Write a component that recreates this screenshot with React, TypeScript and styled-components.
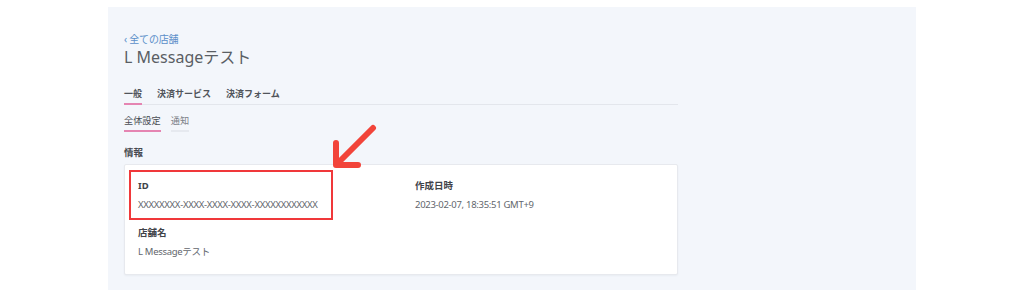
import React from 'react'
import styled, { createGlobalStyle } from 'styled-components'

const GlobalStyle = createGlobalStyle`
    html, body {
        margin: 0;
        padding: 0;
        background: #ffffff;
        font-family: 'Noto Sans', 'Noto Sans CJK JP', sans-serif;
    }
`

interface Tab {
    label: string
    active?: boolean
}

interface Field {
    label: string
    value: string
    highlighted?: boolean
}

const mainTabs: Tab[] = [
    { label: '一般', active: true },
    { label: '決済サービス' },
    { label: '決済フォーム' },
]

const subTabs: Tab[] = [{ label: '全体設定', active: true }, { label: '通知' }]

const fields: Field[] = [
    { label: 'ID', value: 'XXXXXXXX-XXXX-XXXX-XXXX-XXXXXXXXXXXX', highlighted: true },
    { label: '作成日時', value: '2023-02-07, 18:35:51 GMT+9' },
    { label: '店舗名', value: 'L Messageテスト' },
]

const App: React.FC = () => {
    return (
        <Page>
            <GlobalStyle />
            <Panel>
                <Content>
                    <BackLink>‹ 全ての店舗</BackLink>
                    <Title>L Messageテスト</Title>

                    <TabBar>
                        {mainTabs.map((tab) => (
                            <MainTab key={tab.label} $active={tab.active}>
                                {tab.label}
                            </MainTab>
                        ))}
                    </TabBar>

                    <SubTabBar>
                        {subTabs.map((tab) => (
                            <SubTab key={tab.label} $active={tab.active}>
                                {tab.label}
                            </SubTab>
                        ))}
                    </SubTabBar>

                    <SectionTitle>情報</SectionTitle>
                    <Card>
                        {fields.map((field) => (
                            <FieldBox key={field.label}>
                                {field.highlighted && <Highlight />}
                                <FieldLabel>{field.label}</FieldLabel>
                                <FieldValue>{field.value}</FieldValue>
                            </FieldBox>
                        ))}
                    </Card>
                </Content>

                <Arrow width="56" height="52" viewBox="0 0 56 52">
                    <path
                        d="M44 4 L9 39 M7 19 L7 41 L29 41"
                        fill="none"
                        stroke="#f2443a"
                        strokeWidth="6"
                        strokeLinecap="round"
                        strokeLinejoin="round"
                    />
                </Arrow>
            </Panel>
        </Page>
    )
}

export default App

const Page = styled.div`
    padding-top: 7px;
    height: 298px;
    box-sizing: border-box;
`

const Panel = styled.div`
    position: relative;
    margin-left: 108px;
    width: 808px;
    height: 283px;
    background: #f3f6fb;
    padding: 25px 16px 0;
    box-sizing: border-box;
`

const Content = styled.div`
    width: 554px;
    display: flex;
    flex-direction: column;
    align-items: flex-start;
`

const BackLink = styled.a`
    font-size: 10px;
    line-height: 14px;
    color: #5b8fc9;
    letter-spacing: -0.2px;
`

const Title = styled.h1`
    margin: 0;
    font-size: 16px;
    line-height: 22px;
    font-weight: 400;
    color: #5a5e64;
`

const TabBar = styled.div`
    margin-top: 19px;
    width: 100%;
    display: flex;
    gap: 15px;
    border-bottom: 1px solid #e3e6ec;
`

const MainTab = styled.div<{ $active?: boolean }>`
    font-size: 9px;
    line-height: 14px;
    font-weight: 700;
    color: #50545a;
    padding-bottom: 2px;
    margin-bottom: -1px;
    border-bottom: 2px solid ${({ $active }) => ($active ? '#e585b2' : 'transparent')};
`

const SubTabBar = styled.div`
    margin-top: 9px;
    display: flex;
    gap: 10px;
`

const SubTab = styled.div<{ $active?: boolean }>`
    font-size: 9.2px;
    line-height: 14px;
    color: ${({ $active }) => ($active ? '#4a4e54' : '#7b8087')};
    padding-bottom: 2px;
    border-bottom: 2px solid ${({ $active }) => ($active ? '#e585b2' : '#e6e9ef')};
`

const SectionTitle = styled.div`
    margin-top: 14px;
    font-size: 9.5px;
    line-height: 14px;
    font-weight: 700;
    color: #45494f;
`

const Card = styled.div`
    margin-top: 4px;
    width: 100%;
    box-sizing: border-box;
    height: 111px;
    background: #ffffff;
    border: 1px solid #e7e9ee;
    border-radius: 2px;
    box-shadow: 0 1px 2px rgba(40, 50, 70, 0.05);
    padding: 14px 13px 0;
    display: grid;
    grid-template-columns: 277px 1fr;
    row-gap: 14px;
    align-content: start;
`

const FieldBox = styled.div`
    position: relative;
    display: flex;
    flex-direction: column;
    gap: 5px;
`

const Highlight = styled.div`
    position: absolute;
    top: -9px;
    left: -9px;
    width: 204px;
    height: 50px;
    box-sizing: border-box;
    border: 2px solid #f0383a;
`

const FieldLabel = styled.div`
    font-size: 9.5px;
    line-height: 14px;
    font-weight: 700;
    color: #3f4349;
`

const FieldValue = styled.div`
    font-size: 9.5px;
    line-height: 14px;
    color: #62666c;
    letter-spacing: -0.3px;
`

const Arrow = styled.svg`
    position: absolute;
    left: 221px;
    top: 117px;
`
